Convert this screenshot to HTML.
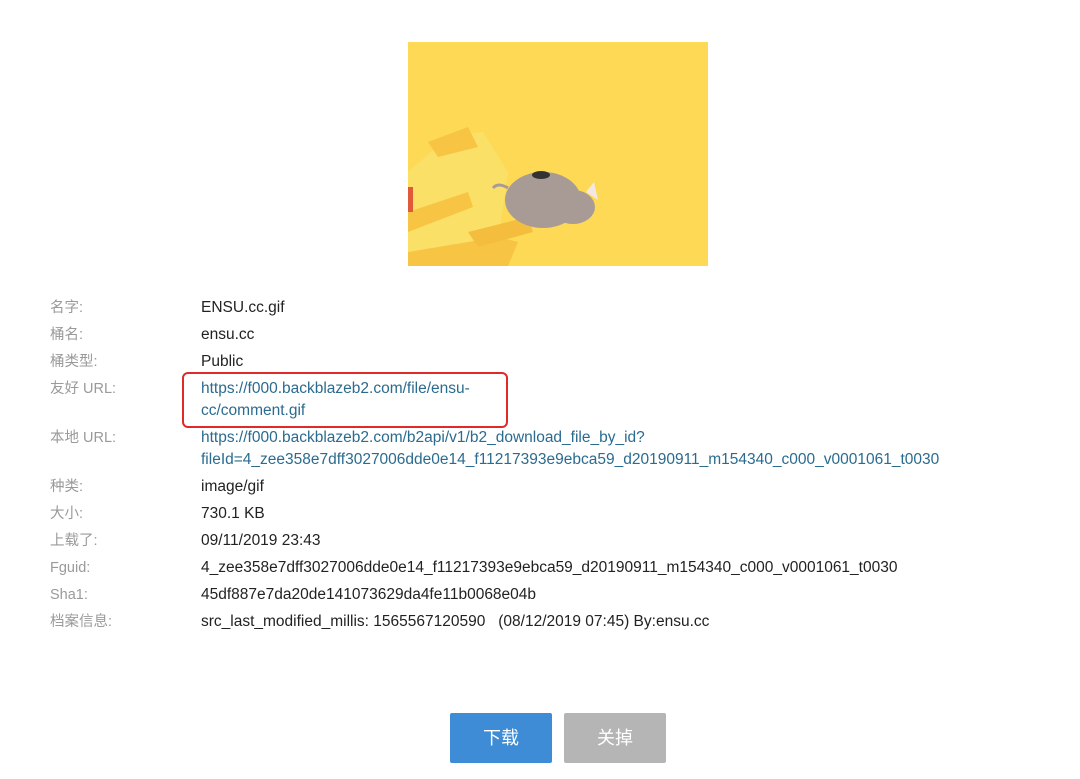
<!DOCTYPE html>
<html><head><meta charset="utf-8"><style>
body{margin:0;width:1080px;height:779px;background:#fff;position:relative;overflow:hidden;font-family:"Liberation Sans","Noto Sans CJK SC",sans-serif;font-size:15.5px}
.l{position:absolute;left:50px;color:#9a9a9a;line-height:22px;font-size:14.5px}
.v{position:absolute;left:201px;color:#222;line-height:22px;white-space:nowrap}
.a{color:#2a6b8f}
.btn{position:absolute;top:713px;width:102px;height:50px;color:#fff;font-size:18px;line-height:50px;text-align:center;border-radius:2px}
</style></head><body>
<svg style="position:absolute;left:408px;top:42px" width="300" height="224" viewBox="0 0 300 224">
<rect width="300" height="224" fill="#fdd955"/>
<polygon points="0,130 40,95 75,90 100,130 90,200 0,224" fill="#fbe068"/>
<polygon points="20,100 60,85 70,105 30,115" fill="#f7c443"/>
<polygon points="0,170 60,150 65,165 0,190" fill="#f7c443"/>
<polygon points="0,210 90,195 110,200 100,224 0,224" fill="#f7c443"/>
<polygon points="60,190 120,175 125,190 70,205" fill="#f5bd3e"/>
<rect x="0" y="145" width="5" height="25" fill="#e05a3a"/>
<ellipse cx="135" cy="158" rx="38" ry="28" fill="#a89b95"/>
<ellipse cx="165" cy="165" rx="22" ry="17" fill="#a89b95"/>
<polygon points="178,150 186,140 190,158" fill="#f3e7e2"/>
<path d="M100,146 Q90,140 85,146" stroke="#a89b95" stroke-width="3" fill="none"/>
<ellipse cx="133" cy="133" rx="9" ry="4" fill="#333"/>
</svg>
<div class="l" style="top:297px">名字:</div><div class="v" style="top:297px">ENSU.cc.gif</div>
<div class="l" style="top:324px">桶名:</div><div class="v" style="top:324px">ensu.cc</div>
<div class="l" style="top:351px">桶类型:</div><div class="v" style="top:351px">Public</div>
<div class="l" style="top:378px">友好 URL:</div><div class="v a" style="top:378px">https://f000.backblazeb2.com/file/ensu-<br>cc/comment.gif</div>
<div style="position:absolute;left:182px;top:372px;width:322px;height:52px;border:2.5px solid #e02a2a;border-radius:6px"></div>
<div class="l" style="top:427px">本地 URL:</div><div class="v a" style="top:427px">https://f000.backblazeb2.com/b2api/v1/b2_download_file_by_id?<br>fileId=4_zee358e7dff3027006dde0e14_f11217393e9ebca59_d20190911_m154340_c000_v0001061_t0030</div>
<div class="l" style="top:476px">种类:</div><div class="v" style="top:476px">image/gif</div>
<div class="l" style="top:503px">大小:</div><div class="v" style="top:503px">730.1 KB</div>
<div class="l" style="top:530px">上载了:</div><div class="v" style="top:530px">09/11/2019 23:43</div>
<div class="l" style="top:557px">Fguid:</div><div class="v" style="top:557px">4_zee358e7dff3027006dde0e14_f11217393e9ebca59_d20190911_m154340_c000_v0001061_t0030</div>
<div class="l" style="top:584px">Sha1:</div><div class="v" style="top:584px">45df887e7da20de141073629da4fe11b0068e04b</div>
<div class="l" style="top:611px">档案信息:</div><div class="v" style="top:611px">src_last_modified_millis: 1565567120590 &nbsp;&nbsp;(08/12/2019 07:45) By:ensu.cc</div>
<div class="btn" style="left:450px;background:#3e8bd6">下载</div>
<div class="btn" style="left:564px;background:#b5b5b5">关掉</div>
</body></html>
